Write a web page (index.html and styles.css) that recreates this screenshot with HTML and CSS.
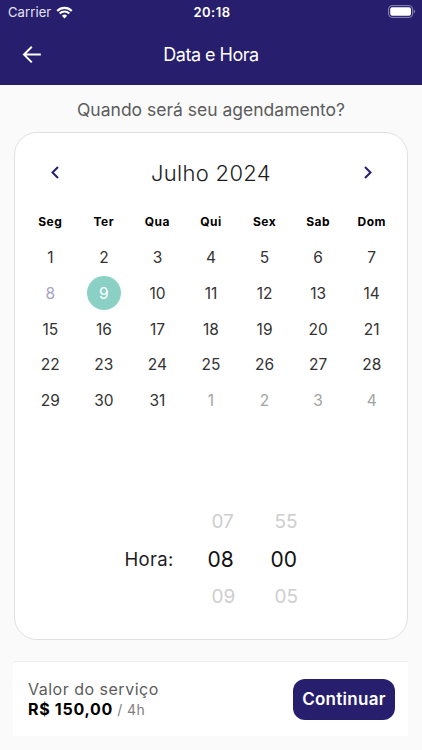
FILE: index.html
```html
<!DOCTYPE html>
<html lang="pt-BR">
<head>
    <meta charset="UTF-8">
    <meta name="viewport" content="width=device-width, initial-scale=1.0">
    <title>Data e Hora</title>
    <link rel="stylesheet" href="styles.css">
</head>
<body>
    <header class="header">
        <div class="status-bar">
            <div class="carrier">
                <span>Carrier</span>
                <svg class="wifi" viewBox="0 0 17 13" width="17" height="13">
                    <path d="M1.2 4.9a10.3 10.3 0 0 1 14.6 0" />
                    <path d="M3.7 7.5a6.8 6.8 0 0 1 9.6 0" />
                    <path class="wifi-dot" d="M5.9 9.7a3.7 3.7 0 0 1 5.2 0L8.5 12.4z" />
                </svg>
            </div>
            <div class="clock">20:18</div>
            <svg class="battery" viewBox="0 0 28 13" width="28" height="13">
                <rect class="battery-case" x="0.6" y="0.6" width="24" height="11.8" rx="3.4" />
                <rect class="battery-level" x="2.2" y="2.2" width="20.8" height="8.6" rx="2" />
                <path class="battery-tip" d="M25.8 4.6c1.6.4 1.6 3.4 0 3.8z" />
            </svg>
        </div>
        <div class="nav-bar">
            <button class="back" aria-label="Voltar">
                <svg viewBox="0 0 20 18" width="20" height="18">
                    <path d="M18.8 8.6H2M9.8 0.8L2 8.6l7.8 7.8" />
                </svg>
            </button>
            <h1>Data e Hora</h1>
        </div>
    </header>

    <main>
        <h2 class="question">Quando será seu agendamento?</h2>

        <section class="card">
            <div class="month">
                <button class="arrow" aria-label="Mês anterior">
                    <svg viewBox="0 0 8 13" width="8" height="13"><path d="M7 1L1.5 6.5 7 12" /></svg>
                </button>
                <span class="month-name">Julho 2024</span>
                <button class="arrow" aria-label="Próximo mês">
                    <svg viewBox="0 0 8 13" width="8" height="13"><path d="M1 1l5.5 5.5L1 12" /></svg>
                </button>
            </div>

            <div class="weekdays">
                <span>Seg</span><span>Ter</span><span>Qua</span><span>Qui</span><span>Sex</span><span>Sab</span><span>Dom</span>
            </div>

            <div class="days">
                <span>1</span><span>2</span><span>3</span><span>4</span><span>5</span><span>6</span><span>7</span>
                <span class="today">8</span><span class="selected">9</span><span>10</span><span>11</span><span>12</span><span>13</span><span>14</span>
                <span>15</span><span>16</span><span>17</span><span>18</span><span>19</span><span>20</span><span>21</span>
                <span>22</span><span>23</span><span>24</span><span>25</span><span>26</span><span>27</span><span>28</span>
                <span>29</span><span>30</span><span>31</span><span class="outside">1</span><span class="outside">2</span><span class="outside">3</span><span class="outside">4</span>
            </div>

            <div class="time">
                <span class="time-label">Hora:</span>
                <div class="wheel hours">
                    <span>07</span>
                    <span class="current">08</span>
                    <span>09</span>
                </div>
                <div class="wheel minutes">
                    <span>55</span>
                    <span class="current">00</span>
                    <span>05</span>
                </div>
            </div>
        </section>

        <footer class="summary">
            <div>
                <div class="summary-label">Valor do serviço</div>
                <div class="price"><strong>R$ 150,00</strong> <span>/ 4h</span></div>
            </div>
            <button class="continue">Continuar</button>
        </footer>
    </main>
</body>
</html>
```
FILE: styles.css
```css
* {
    box-sizing: border-box;
}

body {
    margin: 0;
    min-height: 750px;
    background: #fafafa;
    color: #1c1c1e;
    font-family: Inter, "Liberation Sans", sans-serif;
    white-space: nowrap;
}

button {
    padding: 0;
    border: none;
    background: none;
    font-family: inherit;
}

svg {
    display: block;
    fill: none;
}

.header {
    height: 85px;
    background: #271f6d;
    color: #fff;
}

.status-bar {
    display: grid;
    grid-template-columns: 1fr auto 1fr;
    align-items: center;
    height: 24px;
    padding: 0 6px 0 8px;
}

.carrier {
    display: flex;
    align-items: center;
    gap: 5px;
    color: #e6e4f2;
    font-size: 13px;
    letter-spacing: 0.1px;
}

.wifi path {
    stroke: #fff;
    stroke-width: 2.1;
}

.wifi .wifi-dot {
    fill: #fff;
    stroke: none;
}

.clock {
    font-size: 13px;
    font-weight: 600;
    letter-spacing: 0.5px;
}

.battery {
    justify-self: end;
    margin-bottom: 1px;
}

.battery-case {
    stroke: #8d88b5;
}

.battery-level {
    fill: #fff;
}

.battery-tip {
    fill: #8d88b5;
}

.nav-bar {
    display: grid;
    grid-template-columns: 1fr auto 1fr;
    align-items: center;
    height: 61px;
    padding: 0 22px;
}

.back {
    justify-self: start;
}

.back path {
    stroke: #fff;
    stroke-width: 2;
}

h1 {
    margin: 0;
    font-size: 18px;
    font-weight: 400;
    letter-spacing: -0.5px;
}

main {
    padding: 0 14px;
}

.question {
    margin: 0;
    height: 47px;
    color: #5c5c5c;
    font-size: 17.5px;
    font-weight: 400;
    line-height: 49px;
    text-align: center;
}

.card {
    height: 508px;
    padding: 0 8.5px;
    border: 1px solid #e0e0e0;
    border-radius: 23px;
    background: #fff;
}

.month {
    display: flex;
    align-items: center;
    justify-content: space-between;
    height: 79px;
    padding: 0 27px;
}

.arrow path {
    stroke: #271f6d;
    stroke-width: 2;
}

.month-name {
    font-size: 22px;
    font-weight: 300;
    letter-spacing: 0.3px;
}

.weekdays,
.days {
    display: grid;
    grid-template-columns: repeat(7, 1fr);
    justify-items: center;
    align-items: center;
}

.weekdays {
    height: 18px;
    color: #000;
    font-size: 12px;
    font-weight: 700;
    letter-spacing: 0.5px;
}

.days {
    grid-auto-rows: 35.8px;
    margin-top: 9.6px;
    color: #333;
    font-size: 15.5px;
}

.days .today {
    color: #a9a4cb;
}

.days .selected {
    width: 34px;
    height: 34px;
    border-radius: 50%;
    background: #8bd0c5;
    color: #fff;
    line-height: 35px;
    text-align: center;
}

.days .outside {
    color: #a3a3a3;
}

.time {
    display: flex;
    align-items: center;
    margin-top: 84.4px;
    padding-left: 101px;
}

.time-label {
    width: 83px;
    font-size: 18.5px;
    letter-spacing: 0.3px;
}

.wheel {
    display: grid;
    grid-auto-rows: 37.5px;
    align-items: center;
    width: 64px;
    color: #cecece;
    font-size: 19px;
}

.hours {
    padding-left: 4px;
}

.minutes {
    padding-left: 3px;
}

.wheel .current {
    margin-left: -4px;
    color: #111;
    font-size: 21px;
}

.summary {
    display: flex;
    align-items: center;
    justify-content: space-between;
    height: 75px;
    margin: 21px 0 0 -1px;
    padding: 0 13px 0 15px;
    border-top: 1px solid #eee;
    background: #fff;
}

.summary-label {
    color: #5c5c5c;
    font-size: 16px;
    line-height: 20px;
    letter-spacing: 0.5px;
}

.price {
    color: #808080;
    font-size: 14px;
    line-height: 20px;
    letter-spacing: 0.4px;
}

.price strong {
    color: #000;
    font-size: 16px;
    letter-spacing: 0.7px;
}

.continue {
    width: 102px;
    height: 41px;
    border-radius: 12px;
    background: #271f6d;
    color: #fff;
    font-size: 17px;
    font-weight: 600;
    letter-spacing: 0.3px;
}
```
